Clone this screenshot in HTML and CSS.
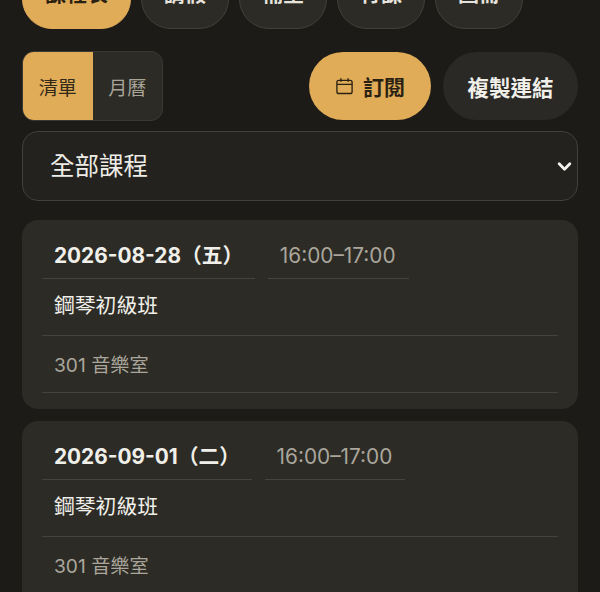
FILE: index.html
```html
<!DOCTYPE html>
<html lang="zh-Hant">
<head>
  <meta charset="UTF-8">
  <meta name="viewport" content="width=device-width, initial-scale=1.0">
  <title>課程表</title>

  <link rel="stylesheet" href="styles.css">

</head>
<body>

  <main>
    <nav class="tabs">
      <a class="tab tabActive" href="#">課程表</a>
      <a class="tab" href="#">請假</a>
      <a class="tab" href="#">補堂</a>
      <a class="tab" href="#">行課</a>
      <a class="tab" href="#">圖冊</a>
    </nav>

    <div class="toolbar">
      <div class="viewSwitch">
        <button class="viewBtn viewBtnActive">清單</button>
        <button class="viewBtn">月曆</button>
      </div>
      <div class="actions">
        <button class="pill pillGold">
          <svg class="calIcon" viewBox="0 0 20 20" fill="none" stroke="currentColor" stroke-width="1.4">
            <rect x="2" y="3.6" width="16" height="13.8" rx="2"/>
            <path d="M2 7.8h16M6.2 1.4v3.6M13.8 1.4v3.6"/>
          </svg>
          訂閱
        </button>
        <button class="pill pillDark">複製連結</button>
      </div>
    </div>

    <div class="courseFilter">
      <select class="courseSelect">
        <option>全部課程</option>
      </select>
      <svg class="chevron" viewBox="0 0 14 10" fill="none" stroke="currentColor" stroke-width="2.6" stroke-linecap="round" stroke-linejoin="round">
        <path d="M2 2.5l5 5 5-5"/>
      </svg>
    </div>

    <section class="lesson">
      <div class="lessonHead">
        <div class="cell date">2026-08-28（五）</div>
        <div class="cell time">16:00–17:00</div>
      </div>
      <div class="cell name">鋼琴初級班</div>
      <div class="cell room">301 音樂室</div>
    </section>

    <section class="lesson">
      <div class="lessonHead">
        <div class="cell date">2026-09-01（二）</div>
        <div class="cell time">16:00–17:00</div>
      </div>
      <div class="cell name">鋼琴初級班</div>
      <div class="cell room">301 音樂室</div>
    </section>
  </main>

</body>
</html>
```

FILE: styles.css
```css
html,
body {
  height: 100%;
  overflow: hidden;
}

body {
  margin: 0;
  background-color: #1c1b18;
  color: #f1efe9;
  font-family: Inter, "Noto Sans CJK TC", sans-serif;
}

main {
  padding: 0 22px;
  margin-top: -31px;
}

button {
  font-family: inherit;
  border: none;
  cursor: pointer;
}

.tabs {
  display: flex;
  gap: 10px;
}

.tab {
  box-sizing: border-box;
  width: 88px;
  height: 60px;
  padding-bottom: 14px;
  display: flex;
  align-items: center;
  justify-content: center;
  background-color: #2c2b26;
  border: 1.5px solid #42403b;
  border-radius: 30px;
  color: #e6e3dc;
  font-size: 21px;
  font-weight: 700;
  text-decoration: none;
}

.tabActive {
  width: 109px;
  background-color: #e0ac57;
  border-color: #e0ac57;
  color: #2a2113;
}

.toolbar {
  display: flex;
  justify-content: space-between;
  align-items: center;
  margin-top: 22px;
}

.viewSwitch {
  box-sizing: border-box;
  display: flex;
  width: 141px;
  height: 70px;
  background-color: #2c2b26;
  border: 1.5px solid #3a3834;
  border-radius: 12px;
  overflow: hidden;
}

.viewBtn {
  flex: 1;
  background: none;
  color: #a8a498;
  font-size: 19px;
}

.viewBtnActive {
  background-color: #e0ac57;
  color: #33291a;
}

.actions {
  display: flex;
  gap: 12px;
}

.pill {
  display: flex;
  align-items: center;
  justify-content: center;
  height: 68px;
  border-radius: 34px;
  font-size: 21px;
  font-weight: 700;
}

.pillGold {
  width: 122px;
  gap: 9px;
  background-color: #e0ac57;
  color: #2a2113;
}

.pillDark {
  width: 135px;
  background-color: #2a2926;
  color: #f1efe9;
  font-size: 21.5px;
}

.calIcon {
  width: 19px;
  height: 19px;
}

.courseFilter {
  position: relative;
  margin-top: 10px;
}

.courseSelect {
  display: block;
  box-sizing: border-box;
  width: 100%;
  height: 70px;
  padding: 0 27px;
  appearance: none;
  background-color: #23221f;
  border: 1.5px solid #42403b;
  border-radius: 16px;
  color: #eeece6;
  font-family: inherit;
  font-size: 24.5px;
}

.chevron {
  position: absolute;
  top: 30px;
  right: 6px;
  width: 15px;
  height: 11px;
  color: #f4f2ec;
}

.lesson {
  margin-top: 19px;
  padding: 0 20px 16px;
  background-color: #2c2b26;
  border-radius: 16px;
}

.lesson + .lesson {
  margin-top: 12px;
}

.lessonHead {
  display: flex;
  gap: 12.5px;
}

.cell {
  box-sizing: border-box;
  display: flex;
  align-items: center;
  padding: 0 12px;
  border-bottom: 1.5px solid #45433d;
  font-size: 20.8px;
  line-height: 28px;
  white-space: nowrap;
}

.date,
.time {
  height: 59px;
  padding-top: 13px;
}

.date {
  font-weight: 700;
  color: #f1efe9;
}

.time {
  padding-right: 13px;
  color: #aaa69b;
}

.name,
.room {
  height: 57px;
}

.name {
  padding-bottom: 2px;
}

.room {
  padding-top: 2px;
  color: #aaa69b;
  font-size: 19.2px;
}
```
